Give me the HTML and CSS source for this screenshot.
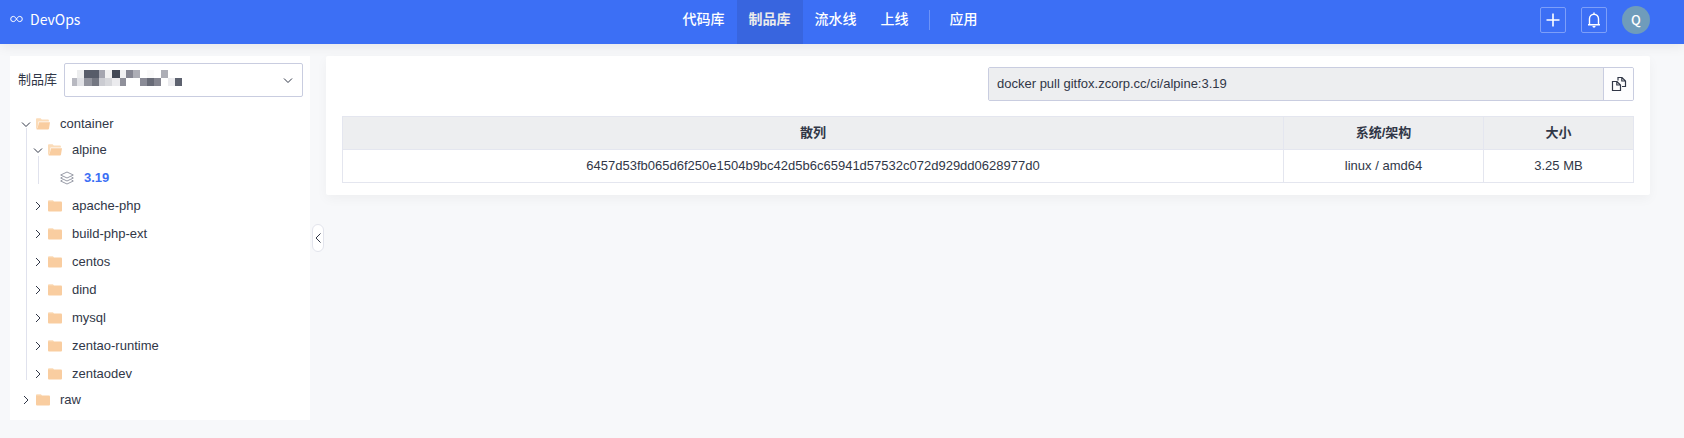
FILE: index.html
```html
<!DOCTYPE html>
<html lang="zh-CN">
<head>
    <meta charset="UTF-8">
    <meta name="viewport" content="width=device-width, initial-scale=1.0">
    <title>制品库 - DevOps</title>
    <link rel="stylesheet" href="styles.css">
</head>
<body>
    <!-- Shared icons -->
    <svg class="icon-defs" aria-hidden="true">
        <symbol id="icon-down" viewBox="0 0 14 14">
            <path d="M3 5.500l4 4 4-4" fill="none" stroke="currentColor"/>
        </symbol>
        <symbol id="icon-right" viewBox="0 0 14 14">
            <path d="M5 3l4 4-4 4" fill="none" stroke="currentColor"/>
        </symbol>
        <symbol id="icon-folder" viewBox="0 0 14 14">
            <path d="M0 3V2.200Q0 1.300 .9 1.300H5L6.200 3z" fill="#fbdcb9"/>
            <path d="M0 2.600H13Q14 2.600 14 3.600V11.500Q14 12.500 13 12.500H1Q0 12.500 0 11.500z" fill="#f9cda0"/>
        </symbol>
        <symbol id="icon-folder-open" viewBox="0 0 14 14">
            <path d="M0 11.500V2.200Q0 1.300 .9 1.300H4.600L5.800 2.600H12Q12.900 2.600 12.900 3.500V4.400H2.500L1.500 11.500z" fill="#fbdcb9"/>
            <path d="M3 5.200H14L13 11.600Q12.900 12.500 12 12.500H1Q.2 12.500 .6 11.500L1.600 11z" fill="#f9cda0"/>
        </symbol>
    </svg>

    <!-- Header -->
    <header class="header">
        <a href="#" class="brand">
            <svg class="brand-icon" viewBox="0 0 13 8" aria-hidden="true">
                <path d="M6.500 4C5.500 2.400 4.600 1.400 3.300 1.400a2.600 2.600 0 0 0 0 5.200C4.600 6.600 5.500 5.600 6.500 4S8.400 1.400 9.700 1.400a2.600 2.600 0 0 1 0 5.200C8.400 6.600 7.500 5.600 6.500 4z" fill="none" stroke="currentColor"/>
            </svg>
            DevOps
        </a>
        <nav class="nav">
            <a href="#">代码库</a>
            <a href="#" class="active">制品库</a>
            <a href="#">流水线</a>
            <a href="#">上线</a>
            <span class="nav-divider"></span>
            <a href="#">应用</a>
        </nav>
        <div class="header-tools">
            <button type="button" class="tool-btn" aria-label="新建">
                <svg viewBox="0 0 16 16"><path d="M8 1.500v13M1.500 8h13" fill="none" stroke="currentColor" stroke-width="1.600"/></svg>
            </button>
            <button type="button" class="tool-btn" aria-label="通知">
                <svg viewBox="0 0 16 16">
                    <path d="M3.500 12.500V6.800a4.500 4.500 0 0 1 9 0V12.500M2 12.700h12M8 .6V2.400" fill="none" stroke="currentColor" stroke-width="1.400"/>
                    <path d="M6.300 14h3.400Q9.400 15.700 8 15.700T6.300 14z" fill="currentColor"/>
                </svg>
            </button>
            <button type="button" class="avatar">Q</button>
        </div>
    </header>

    <div class="page">
        <!-- Sidebar -->
        <div class="sidebar-wrap">
            <aside class="sidebar">
                <div class="repo-picker">
                    <label for="repo">制品库</label>
                    <div class="select-box">
                        <select id="repo"><option></option></select>
                        <svg class="masked-name" viewBox="0 0 110 16" shape-rendering="crispEdges" aria-hidden="true">
                            <path d="M5 0h7v8H5z" fill="#ecedee"/>
                            <path d="M12 0h15v8H12z" fill="#575c69"/>
                            <path d="M27 0h6v8H27z" fill="#a5a6b0"/>
                            <path d="M33 0h7v8H33zM48 0h6v8H48z" fill="#f1f1f2"/>
                            <path d="M40 0h8v8H40z" fill="#434956"/>
                            <path d="M54 0h7v8H54z" fill="#858692"/>
                            <path d="M61 0h7v8H61zM89 0h7v8H89z" fill="#adaeb6"/>
                            <path d="M75 0h7v8H75z" fill="#fafafa"/>
                            <path d="M0 8h5v8H0z" fill="#b8b9c1"/>
                            <path d="M5 8h7v8H5z" fill="#e1e2e6"/>
                            <path d="M12 8h8v8H12z" fill="#92949e"/>
                            <path d="M20 8h7v8H20z" fill="#747782"/>
                            <path d="M27 8h6v8H27z" fill="#cbccd2"/>
                            <path d="M33 8h7v8H33z" fill="#d7d8dc"/>
                            <path d="M40 8h8v8H40zM96 8h7v8H96z" fill="#ebebee"/>
                            <path d="M48 8h6v8H48z" fill="#8f909a"/>
                            <path d="M68 8h7v8H68z" fill="#8a8b96"/>
                            <path d="M75 8h7v8H75z" fill="#686b77"/>
                            <path d="M82 8h7v8H82z" fill="#848590"/>
                            <path d="M103 8h7v8H103z" fill="#5d626f"/>
                        </svg>
                        <svg class="select-arrow" aria-hidden="true"><use href="#icon-down"/></svg>
                    </div>
                </div>

                <ul class="tree">
                    <li>
                        <a href="#" class="tree-item"><svg><use href="#icon-down"/></svg><svg><use href="#icon-folder-open"/></svg><span>container</span></a>
                        <ul>
                            <li>
                                <a href="#" class="tree-item"><svg><use href="#icon-down"/></svg><svg><use href="#icon-folder-open"/></svg><span>alpine</span></a>
                                <ul>
                                    <li>
                                        <a href="#" class="tree-item leaf selected">
                                            <svg viewBox="0 0 14 14">
                                                <path d="M7 1L13.300 4 7 7 .7 4zM2.500 6L.7 7 7 10l6.300-3L11.500 6M2.500 9L.7 10 7 13l6.300-3L11.500 9" fill="none" stroke="#8b8f9c" stroke-width=".9" stroke-linejoin="round"/>
                                            </svg>
                                            <span>3.19</span>
                                        </a>
                                    </li>
                                </ul>
                            </li>
                            <li><a href="#" class="tree-item"><svg><use href="#icon-right"/></svg><svg><use href="#icon-folder"/></svg><span>apache-php</span></a></li>
                            <li><a href="#" class="tree-item"><svg><use href="#icon-right"/></svg><svg><use href="#icon-folder"/></svg><span>build-php-ext</span></a></li>
                            <li><a href="#" class="tree-item"><svg><use href="#icon-right"/></svg><svg><use href="#icon-folder"/></svg><span>centos</span></a></li>
                            <li><a href="#" class="tree-item"><svg><use href="#icon-right"/></svg><svg><use href="#icon-folder"/></svg><span>dind</span></a></li>
                            <li><a href="#" class="tree-item"><svg><use href="#icon-right"/></svg><svg><use href="#icon-folder"/></svg><span>mysql</span></a></li>
                            <li><a href="#" class="tree-item"><svg><use href="#icon-right"/></svg><svg><use href="#icon-folder"/></svg><span>zentao-runtime</span></a></li>
                            <li><a href="#" class="tree-item"><svg><use href="#icon-right"/></svg><svg><use href="#icon-folder"/></svg><span>zentaodev</span></a></li>
                        </ul>
                    </li>
                    <li>
                        <a href="#" class="tree-item"><svg><use href="#icon-right"/></svg><svg><use href="#icon-folder"/></svg><span>raw</span></a>
                    </li>
                </ul>
            </aside>
            <div class="gutter">
                <button type="button" class="collapse-btn" aria-label="收起">
                    <svg viewBox="0 0 8 12"><path d="M6.500 1.500L2 6l4.500 4.500" fill="none" stroke="currentColor"/></svg>
                </button>
            </div>
        </div>

        <!-- Main Content -->
        <main class="card">
            <div class="pull-command">
                <input type="text" aria-label="拉取命令" value="docker pull gitfox.zcorp.cc/ci/alpine:3.19" readonly>
                <button type="button" aria-label="复制">
                    <svg viewBox="0 0 16 16" fill="none" stroke="currentColor" stroke-width="1.200">
                        <path d="M1.500 5.500H6L9.500 9V14.500H1.500zM5.800 5.500V9H9.500"/>
                        <path d="M7 4.500V1.500H11L14.500 5V10.500H11M10.800 1.500V5H14.500"/>
                    </svg>
                </button>
            </div>
            <table class="digest-table">
                <colgroup>
                    <col>
                    <col class="col-arch">
                    <col class="col-size">
                </colgroup>
                <thead>
                    <tr>
                        <th>散列</th>
                        <th>系统/架构</th>
                        <th>大小</th>
                    </tr>
                </thead>
                <tbody>
                    <tr>
                        <td>6457d53fb065d6f250e1504b9bc42d5b6c65941d57532c072d929dd0628977d0</td>
                        <td>linux / amd64</td>
                        <td>3.25 MB</td>
                    </tr>
                </tbody>
            </table>
        </main>
    </div>
</body>
</html>
```
FILE: styles.css
```css
* {
    box-sizing: border-box;
}
body {
    margin: 0;
    min-height: 100vh;
    background-color: #f7f8fa;
    color: #313747;
    font-family: "Liberation Sans", "Noto Sans CJK SC", sans-serif;
    font-size: 13px;
    line-height: 20px;
}
a {
    color: inherit;
    text-decoration: none;
}
button,
input,
select {
    font: inherit;
    color: inherit;
}
button {
    display: flex;
    align-items: center;
    justify-content: center;
    padding: 0;
    cursor: pointer;
}
ul {
    list-style: none;
    margin: 0;
    padding: 0;
}
.icon-defs {
    position: absolute;
    width: 0;
    height: 0;
}

/* Header */
.header {
    display: grid;
    grid-template-columns: 1fr auto 1fr;
    height: 44px;
    padding: 0 34px 0 10px;
    background-color: #3c6ff5;
    color: #fff;
    font-family: "Noto Sans CJK SC", sans-serif;
    font-size: 14px;
    box-shadow: 0 2px 12px rgba(0, 0, 0, 0.08);
}
.brand {
    display: flex;
    align-items: center;
    gap: 7px;
    padding-bottom: 6px;
}
.brand-icon {
    width: 13px;
    height: 8px;
}
.nav {
    display: flex;
}
.nav a {
    display: flex;
    align-items: center;
    padding: 0 12px 8px;
    font-weight: 500;
}
.nav .active {
    background-color: #3865df;
    color: #ebebeb;
    font-weight: 700;
}
.nav-divider {
    width: 1px;
    height: 20px;
    margin: 10px 8px;
    background-color: #6d93f8;
}
.header-tools {
    display: flex;
    align-items: center;
    justify-content: flex-end;
    gap: 15px;
    padding-bottom: 4px;
}
.tool-btn {
    width: 26px;
    height: 26px;
    border: 1px solid #7d9ff9;
    border-radius: 2px;
    background: none;
    color: #fff;
}
.tool-btn svg {
    width: 16px;
    height: 16px;
}
.avatar {
    width: 28px;
    height: 28px;
    border: none;
    border-radius: 50%;
    background-color: #6f9cbb;
    color: #fff;
    font-size: 13px;
    font-weight: 500;
}

/* Page */
.page {
    display: flex;
    align-items: flex-start;
    padding: 12px 34px 18px 10px;
}
.sidebar-wrap {
    display: flex;
    flex: none;
}
.sidebar {
    width: 300px;
    padding: 7px 7px 8px 8px;
    background-color: #fff;
}
.repo-picker {
    display: flex;
    align-items: center;
    gap: 7px;
}
.select-box {
    position: relative;
    flex: 1;
}
.select-box select {
    display: block;
    width: 100%;
    height: 34px;
    padding: 0 32px 0 8px;
    border: 1px solid #c9cde0;
    border-radius: 2px;
    background-color: #fff;
    appearance: none;
}
.masked-name {
    position: absolute;
    top: 7px;
    left: 8px;
    width: 110px;
    height: 16px;
    pointer-events: none;
}
.select-arrow {
    position: absolute;
    top: 10px;
    right: 8px;
    width: 14px;
    height: 14px;
    pointer-events: none;
}

/* Tree */
.tree {
    margin-top: 15px;
}
.tree ul {
    position: relative;
}
.tree ul::before {
    content: "";
    position: absolute;
    top: -8px;
    bottom: 8px;
    left: 8px;
    width: 1px;
    background-color: #e0e2ed;
}
.tree ul ul::before {
    left: 20px;
}
.tree-item {
    display: flex;
    align-items: center;
    height: 24px;
    padding-left: 1px;
}
.tree ul .tree-item {
    height: 28px;
    padding-left: 13px;
}
.tree ul .leaf {
    padding-left: 42px;
}
.tree-item svg {
    flex: none;
    width: 14px;
    height: 14px;
    margin-right: 3px;
}
.tree-item span {
    padding-left: 7px;
}
.selected {
    color: #3c6ff5;
    font-weight: 700;
}
.gutter {
    display: flex;
    align-items: center;
    justify-content: center;
    width: 16px;
}
.collapse-btn {
    width: 12px;
    height: 28px;
    border: 1px solid #e2e4ec;
    border-radius: 6px;
    background-color: #fff;
}
.collapse-btn svg {
    flex: none;
    width: 8px;
    height: 12px;
}

/* Main card */
.card {
    flex: 1;
    min-width: 0;
    padding: 11px 16px 12px;
    border-radius: 2px;
    background-color: #fff;
    box-shadow: 0 4px 12px rgba(0, 0, 0, 0.04);
}
.pull-command {
    display: flex;
    width: 50%;
    height: 34px;
    margin: 0 0 15px auto;
    border: 1px solid #c9cde0;
    border-radius: 2px;
    overflow: hidden;
}
.pull-command input {
    flex: 1;
    min-width: 0;
    padding: 0 8px;
    border: none;
    background-color: #edeef0;
    outline: none;
}
.pull-command button {
    width: 30px;
    border: none;
    border-left: 1px solid #c9cde0;
    background-color: #fdfdfe;
}
.pull-command svg {
    width: 16px;
    height: 16px;
}
.digest-table {
    width: 100%;
    table-layout: fixed;
    border-collapse: collapse;
    text-align: center;
}
.digest-table th,
.digest-table td {
    height: 33px;
    padding: 0 8px;
    border: 1px solid #e4e6ef;
}
.digest-table th {
    background-color: #edeef0;
    font-weight: 700;
}
.digest-table td {
    overflow-wrap: anywhere;
}
.col-arch {
    width: 200px;
}
.col-size {
    width: 150px;
}
```
